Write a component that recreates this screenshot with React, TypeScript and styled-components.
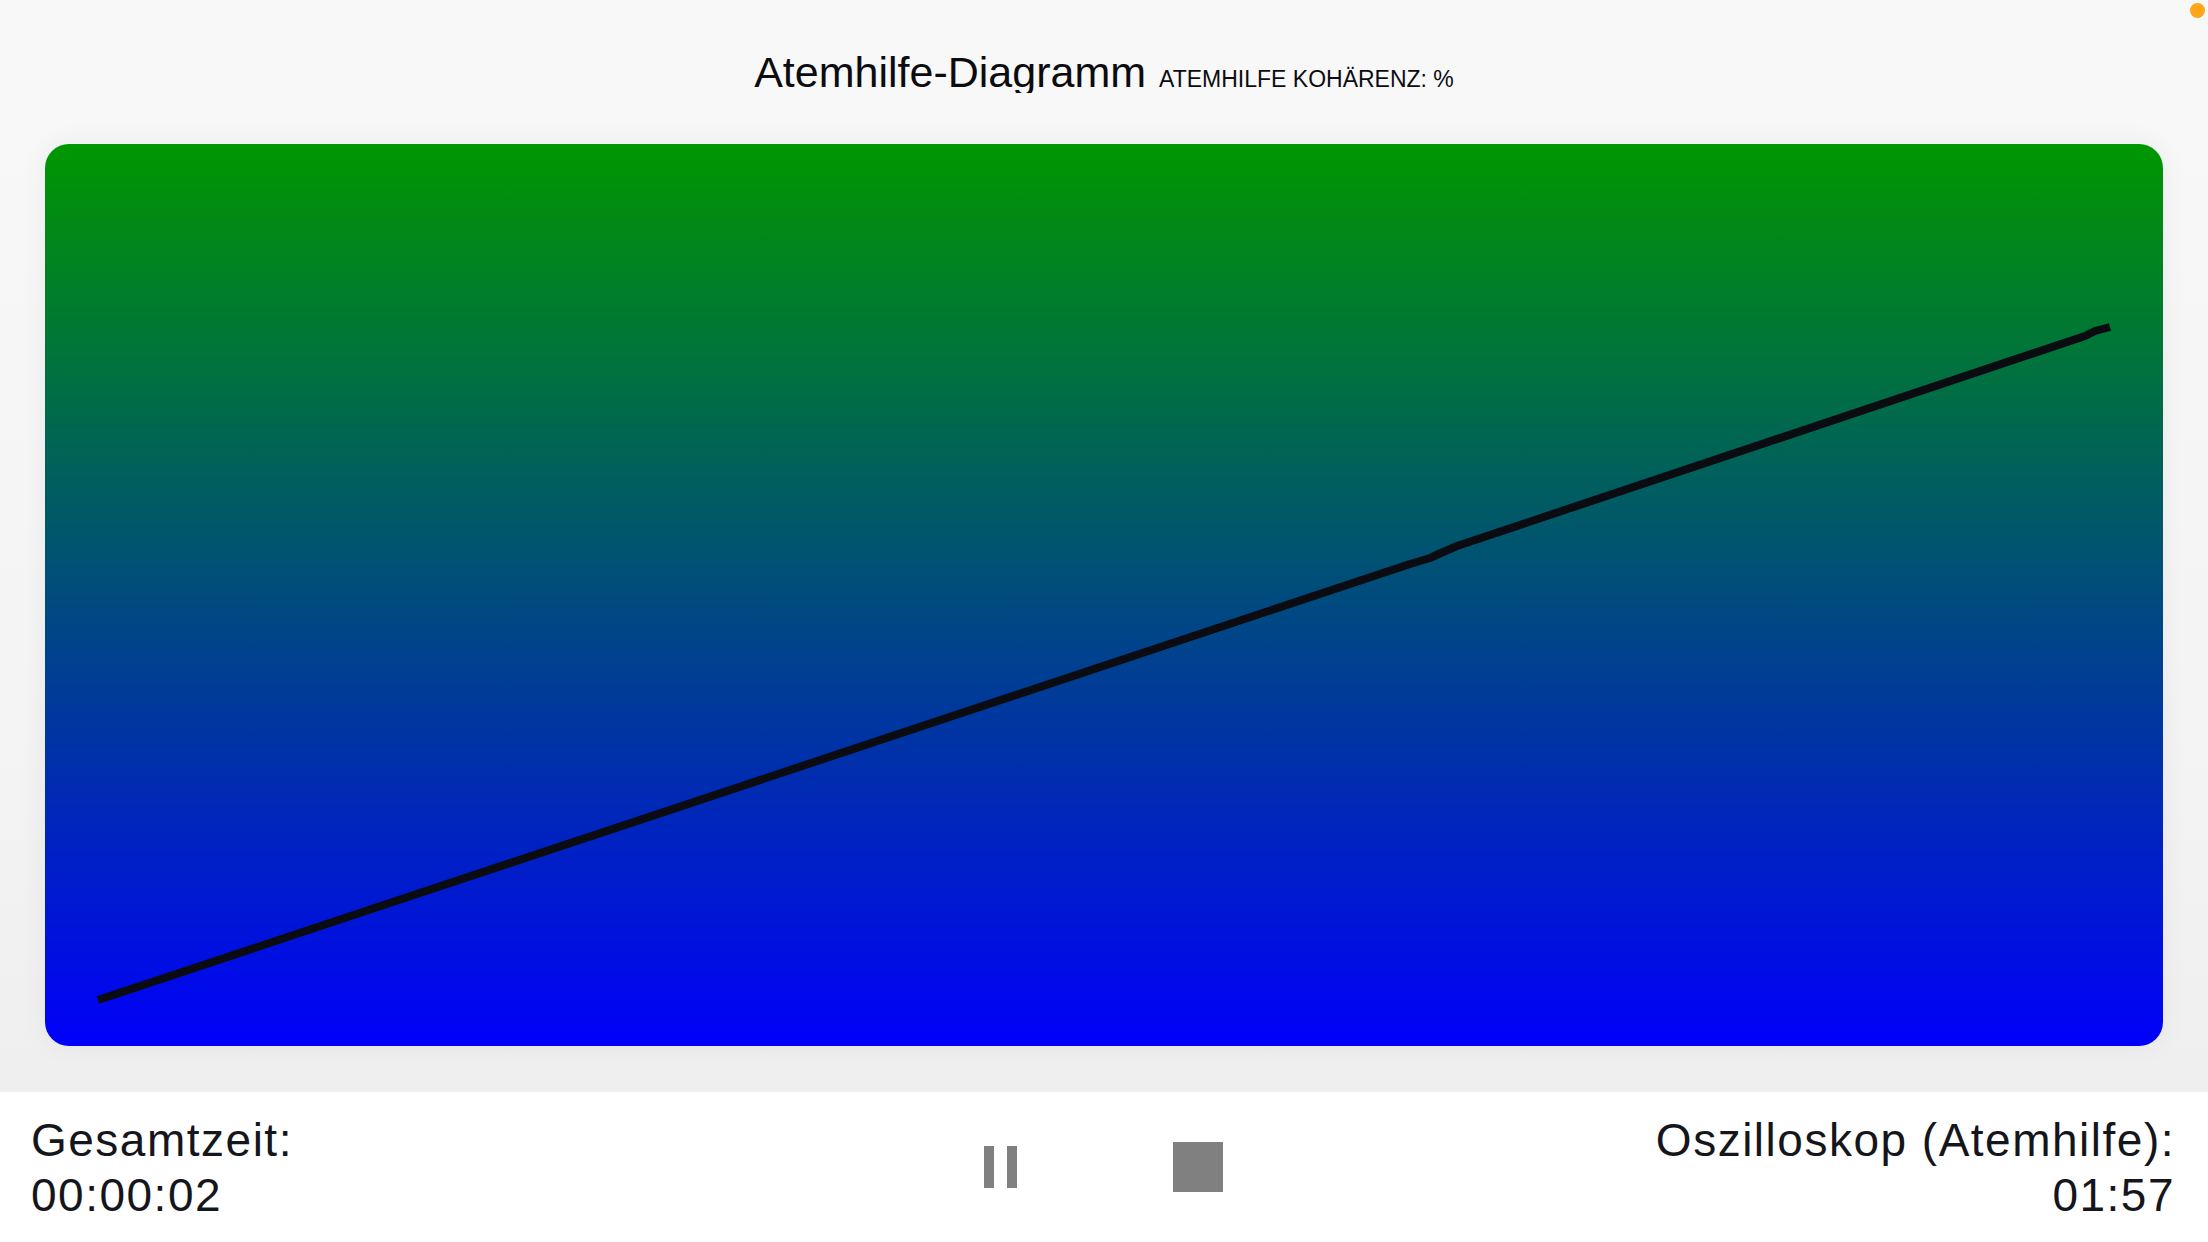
import React from 'react'
import styled, { createGlobalStyle } from 'styled-components'

const GlobalStyle = createGlobalStyle`
  html, body {
    margin: 0;
    padding: 0;
    background: #f8f8f8;
    font-family: "Liberation Sans", Arial, sans-serif;
  }
  * { box-sizing: border-box; }
`

// breath curve, in chart pixels (chart is 2118 x 902)
const curve: [number, number][] = [
  [53, 856],
  [1365, 420],
  [1385, 414],
  [1398, 408],
  [1412, 402],
  [2040, 192],
  [2050, 187],
  [2065, 183],
]

const Page = styled.div`
  height: 100vh;
  display: flex;
  flex-direction: column;
`

const Header = styled.header`
  display: flex;
  justify-content: center;
  align-items: baseline;
  gap: 13px;
  padding-top: 51px;
  height: 93px;
  color: #0c0c10;
`

const Title = styled.h1`
  margin: 0;
  font-size: 43px;
  line-height: 42px;
  font-weight: 400;
`

const Coherence = styled.span`
  font-size: 23px;
  line-height: 42px;
  text-transform: uppercase;
`

const ChartArea = styled.main`
  flex: 1;
  display: flex;
  padding: 51px 45px 46px;
  background: linear-gradient(to bottom, #f8f8f8 0%, #f4f4f4 60%, #efefef 100%);
`

const Chart = styled.div`
  flex: 1;
  border-radius: 24px;
  overflow: hidden;
  background: linear-gradient(to bottom, #009700 0%, #0000fa 100%);
  box-shadow: 0 0 28px rgba(0, 0, 0, 0.06);

  svg {
    display: block;
    width: 100%;
    height: 100%;
  }
`

const Footer = styled.footer`
  height: 150px;
  background: #ffffff;
  display: grid;
  grid-template-columns: 1fr auto 1fr;
  align-items: center;
  padding: 2px 33px 0 31px;
  color: #15161c;
`

const Stat = styled.div<{ $align: 'left' | 'right' }>`
  text-align: ${p => p.$align};
  justify-self: ${p => (p.$align === 'left' ? 'start' : 'end')};
  font-size: 46px;
  line-height: 55px;
  letter-spacing: 1.5px;
`

const Controls = styled.div`
  display: flex;
  align-items: center;
  gap: 156px;
  margin-top: -2px;
`

const PauseButton = styled.button`
  display: flex;
  gap: 13px;
  padding: 0;
  border: 0;
  background: none;
  cursor: pointer;

  span {
    width: 10px;
    height: 42px;
    background: #808080;
  }
`

const StopButton = styled.button`
  width: 50px;
  height: 50px;
  padding: 0;
  border: 0;
  background: #808080;
  cursor: pointer;
`

const StatusDot = styled.div`
  position: fixed;
  top: 3px;
  right: 3px;
  width: 15px;
  height: 15px;
  border-radius: 50%;
  background: #ffa51a;
`

export default function App() {
  const points = curve.map(([x, y]) => `${x},${y}`).join(' ')

  return (
    <Page>
      <GlobalStyle />
      <StatusDot />
      <Header>
        <Title>Atemhilfe-Diagramm</Title>
        <Coherence>Atemhilfe Kohärenz: %</Coherence>
      </Header>
      <ChartArea>
        <Chart>
          <svg viewBox="0 0 2118 902" preserveAspectRatio="none">
            <polyline
              points={points}
              fill="none"
              stroke="#0b0b12"
              strokeWidth={8}
              strokeLinejoin="round"
              vectorEffect="non-scaling-stroke"
            />
          </svg>
        </Chart>
      </ChartArea>
      <Footer>
        <Stat $align="left">
          Gesamtzeit:
          <br />
          00:00:02
        </Stat>
        <Controls>
          <PauseButton aria-label="Pause">
            <span />
            <span />
          </PauseButton>
          <StopButton aria-label="Stop" />
        </Controls>
        <Stat $align="right">
          Oszilloskop (Atemhilfe):
          <br />
          01:57
        </Stat>
      </Footer>
    </Page>
  )
}
